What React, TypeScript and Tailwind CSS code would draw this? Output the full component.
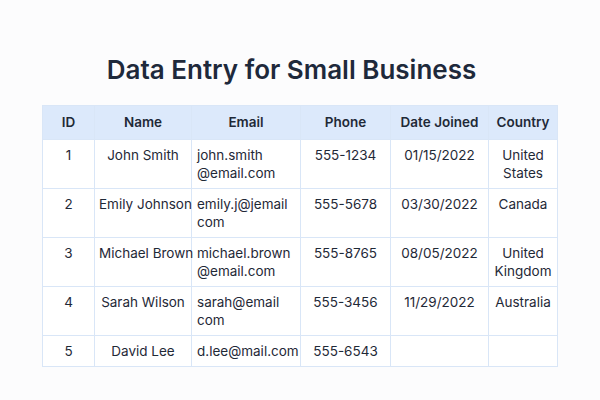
import React from 'react'

const rows = [
  { id: 1, name: 'John Smith', email: ['john.smith', '@email.com'], phone: '555-1234', date: '01/15/2022', country: ['United', 'States'] },
  { id: 2, name: 'Emily Johnson', email: ['emily.j@jemail', 'com'], phone: '555-5678', date: '03/30/2022', country: ['Canada'] },
  { id: 3, name: 'Michael Brown', email: ['michael.brown', '@email.com'], phone: '555-8765', date: '08/05/2022', country: ['United', 'Kingdom'] },
  { id: 4, name: 'Sarah Wilson', email: ['sarah@email', 'com'], phone: '555-3456', date: '11/29/2022', country: ['Australia'] },
  { id: 5, name: 'David Lee', email: ['d.lee@mail.com'], phone: '555-6543', date: '', country: [] as string[] },
]

const cols = [
  { label: 'ID', w: 'w-[52px]' },
  { label: 'Name', w: 'w-[97px]' },
  { label: 'Email', w: 'w-[109px]' },
  { label: 'Phone', w: 'w-[90px]' },
  { label: 'Date Joined', w: 'w-[98px]' },
  { label: 'Country', w: 'w-[69px]' },
]

const td = 'border border-[#d9e6f7] px-[4px] py-[6px] align-top leading-[18px]'

export default function App() {
  return (
    <div className="w-[600px] h-[400px] bg-[#fcfcfd] font-['Inter',sans-serif] text-[#1f2937]">
      <h1 className="pt-[53px] pr-[17px] text-center text-[26px] leading-[34px] font-semibold text-[#1e293b]">
        Data Entry for Small Business
      </h1>
      <div className="mt-[18px] flex justify-center">
        <table className="table-fixed border-collapse w-[515px] text-[13.5px] bg-white">
          <thead>
            <tr className="bg-[#dce9fb]">
              {cols.map((c) => (
                <th key={c.label} className={`${c.w} border border-[#d9e6f7] px-[4px] py-[8px] leading-[17px] font-semibold text-center text-[#1f2937]`}>
                  {c.label}
                </th>
              ))}
            </tr>
          </thead>
          <tbody>
            {rows.map((r) => (
              <tr key={r.id}>
                <td className={`${td} text-center`}>{r.id}</td>
                <td className={`${td} text-center whitespace-nowrap`}>{r.name}</td>
                <td className={`${td} pl-[5px] text-left`}>
                  {r.email.map((l) => (
                    <div key={l}>{l}</div>
                  ))}
                </td>
                <td className={`${td} text-center`}>{r.phone}</td>
                <td className={`${td} text-center`}>{r.date}</td>
                <td className={`${td} text-center`}>
                  {r.country.map((l) => (
                    <div key={l}>{l}</div>
                  ))}
                </td>
              </tr>
            ))}
          </tbody>
        </table>
      </div>
    </div>
  )
}
